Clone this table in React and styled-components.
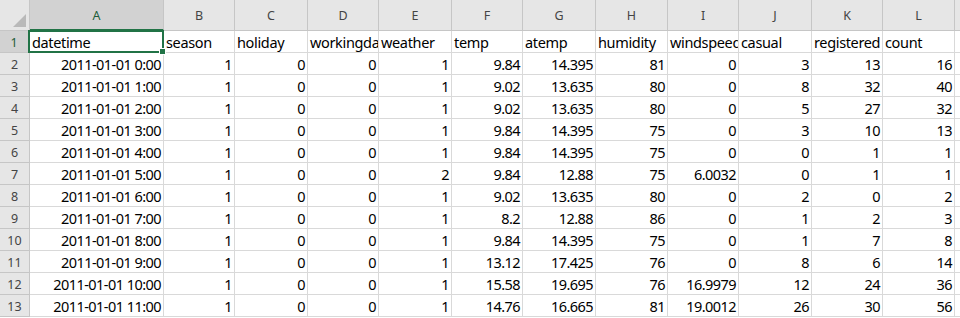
import React from "react";
import styled, { createGlobalStyle } from "styled-components";

const Global = createGlobalStyle`
  html, body { margin: 0; padding: 0; background: #ffffff; }
  body { font-family: "Noto Sans", "Open Sans", sans-serif; overflow: hidden; }
`;

const widths = [30, 134, 71, 73, 71, 73, 71, 73, 72, 71, 73, 71, 72, 80];
const letters = ["A", "B", "C", "D", "E", "F", "G", "H", "I", "J", "K", "L", ""];

const Sheet = styled.div`
  display: grid;
  grid-template-columns: ${widths.map((w) => w + "px").join(" ")};
  grid-template-rows: 31px repeat(13, 22px);
  width: 960px;
  overflow: hidden;
`;

const Corner = styled.div`
  position: relative;
  background: #e6e6e6;
  border-right: 1px solid #c6c6c6;
  border-bottom: 1px solid #c6c6c6;
  box-sizing: border-box;
`;

const CornerTriangle = styled.div`
  position: absolute;
  right: 3px;
  bottom: 3px;
  width: 0;
  height: 0;
  border-left: 13px solid transparent;
  border-bottom: 13px solid #b9b9b9;
`;

const ColHeader = styled.div`
  box-sizing: border-box;
  background: ${(p) => (p.$active ? "#d2d2d2" : "#e6e6e6")};
  border-right: 1px solid #c6c6c6;
  border-bottom: ${(p) => (p.$active ? "2px solid #217346" : "1px solid #c6c6c6")};
  color: ${(p) => (p.$active ? "#1e5e3a" : "#444444")};
  font-size: 12.5px;
  display: flex;
  align-items: flex-end;
  justify-content: center;
  padding-bottom: ${(p) => (p.$active ? "5px" : "6px")};
`;

const RowHeader = styled.div`
  box-sizing: border-box;
  background: ${(p) => (p.$active ? "#d2d2d2" : "#e6e6e6")};
  border-right: ${(p) => (p.$active ? "2px solid #217346" : "1px solid #c6c6c6")};
  border-bottom: 1px solid #c6c6c6;
  color: ${(p) => (p.$active ? "#1e5e3a" : "#444444")};
  font-size: 12.5px;
  display: flex;
  align-items: center;
  justify-content: center;
  padding-top: 1px;
`;

const Cell = styled.div`
  position: relative;
  box-sizing: border-box;
  border-right: 1px solid #d9d9d9;
  border-bottom: 1px solid #d9d9d9;
  font-size: 14.5px;
  letter-spacing: ${(p) => (p.$num ? "-0.55px" : "-0.35px")};
  color: #000000;
  white-space: nowrap;
  overflow: ${(p) => (p.$selected ? "visible" : "hidden")};
  display: flex;
  align-items: center;
  justify-content: ${(p) => (p.$num ? "flex-end" : "flex-start")};
  padding: 1px 2px 0 2px;
`;

const Selection = styled.div`
  position: absolute;
  left: -2px;
  top: -1px;
  right: -1px;
  bottom: -1px;
  border: 2px solid #217346;
  pointer-events: none;
`;

const Handle = styled.div`
  position: absolute;
  right: -4px;
  bottom: -4px;
  width: 5px;
  height: 5px;
  background: #217346;
  border: 1px solid #ffffff;
  z-index: 2;
`;

const CellText = styled.span`
  position: relative;
  z-index: 1;
`;

const headerRow = [
  "datetime",
  "season",
  "holiday",
  "workingday",
  "weather",
  "temp",
  "atemp",
  "humidity",
  "windspeed",
  "casual",
  "registered",
  "count",
];

const data = [
  ["2011-01-01 0:00", 1, 0, 0, 1, "9.84", "14.395", 81, "0", 3, 13, 16],
  ["2011-01-01 1:00", 1, 0, 0, 1, "9.02", "13.635", 80, "0", 8, 32, 40],
  ["2011-01-01 2:00", 1, 0, 0, 1, "9.02", "13.635", 80, "0", 5, 27, 32],
  ["2011-01-01 3:00", 1, 0, 0, 1, "9.84", "14.395", 75, "0", 3, 10, 13],
  ["2011-01-01 4:00", 1, 0, 0, 1, "9.84", "14.395", 75, "0", 0, 1, 1],
  ["2011-01-01 5:00", 1, 0, 0, 2, "9.84", "12.88", 75, "6.0032", 0, 1, 1],
  ["2011-01-01 6:00", 1, 0, 0, 1, "9.02", "13.635", 80, "0", 2, 0, 2],
  ["2011-01-01 7:00", 1, 0, 0, 1, "8.2", "12.88", 86, "0", 1, 2, 3],
  ["2011-01-01 8:00", 1, 0, 0, 1, "9.84", "14.395", 75, "0", 1, 7, 8],
  ["2011-01-01 9:00", 1, 0, 0, 1, "13.12", "17.425", 76, "0", 8, 6, 14],
  ["2011-01-01 10:00", 1, 0, 0, 1, "15.58", "19.695", 76, "16.9979", 12, 24, 36],
  ["2011-01-01 11:00", 1, 0, 0, 1, "14.76", "16.665", 81, "19.0012", 26, 30, 56],
];

export default function App() {
  return (
    <>
      <Global />
      <Sheet>
        <Corner>
          <CornerTriangle />
        </Corner>
        {letters.map((l, i) => (
          <ColHeader key={i} $active={i === 0}>
            {l}
          </ColHeader>
        ))}

        <RowHeader $active>1</RowHeader>
        {headerRow.map((h, i) => (
          <Cell key={h} $selected={i === 0}>
            {i === 0 && (
              <Selection>
                <Handle />
              </Selection>
            )}
            <CellText>{h}</CellText>
          </Cell>
        ))}
        <Cell />

        {data.map((row, r) => (
          <React.Fragment key={r}>
            <RowHeader>{r + 2}</RowHeader>
            {row.map((v, c) => (
              <Cell key={c} $num>
                {v}
              </Cell>
            ))}
            <Cell />
          </React.Fragment>
        ))}
      </Sheet>
    </>
  );
}
